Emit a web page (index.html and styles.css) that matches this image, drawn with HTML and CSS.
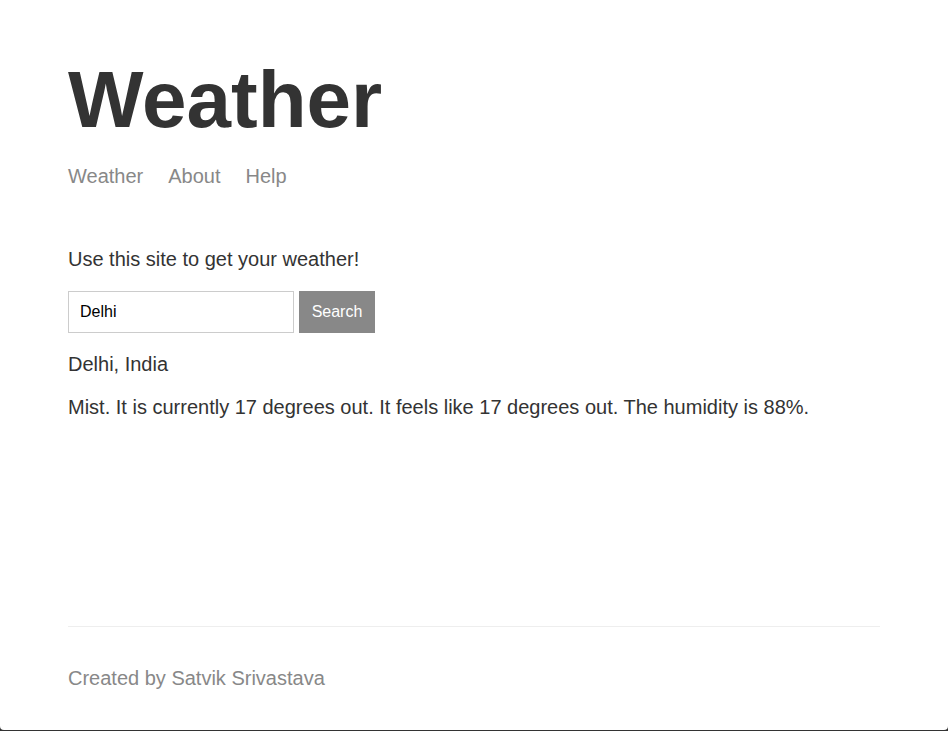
FILE: index.html
```html
<!DOCTYPE html>
<html lang="en">
<head>
<meta charset="utf-8">
<title>Weather</title>
<link rel="stylesheet" href="styles.css">
</head>
<body>
<div class="page">
  <div class="main-content">
    <header class="header">
      <h1 class="title">Weather</h1>
      <nav class="nav">
        <a class="nav-link" href="#">Weather</a>
        <a class="nav-link" href="#">About</a>
        <a class="nav-link" href="#">Help</a>
      </nav>
    </header>
    <main class="main">
      <p class="text">Use this site to get your weather!</p>
      <form class="search-form">
        <input class="search-input" type="text" value="Delhi">
        <button class="search-button" type="button">Search</button>
      </form>
      <p class="text">Delhi, India</p>
      <p class="text">Mist. It is currently 17 degrees out. It feels like 17 degrees out. The humidity is 88%.</p>
    </main>
  </div>
  <footer class="footer">
    <p class="footer-text">Created by Satvik Srivastava</p>
  </footer>
</div>
</body>
</html>
```
FILE: styles.css
```css
html {
  background: #333333;
}

body {
  margin: 0;
  font-family: "Liberation Sans", Arial, sans-serif;
  color: #333333;
}

.page {
  box-sizing: border-box;
  height: 730px;
  background: #ffffff;
  border-radius: 0 0 4px 4px;
  padding: 0 68px;
  display: flex;
  flex-direction: column;
}

.main-content {
  flex-grow: 1;
}

.header {
  padding-top: 54px;
}

.title {
  margin: 0 0 19px;
  font-size: 80px;
  font-weight: bold;
  line-height: 92px;
  color: #333333;
}

.nav {
  display: flex;
  gap: 25px;
  font-size: 20px;
  line-height: 23px;
}

.nav-link {
  color: #888888;
  text-decoration: none;
}

.main {
  padding-top: 40px;
}

.text {
  margin: 20px 0;
  font-size: 20px;
  line-height: 23px;
}

.search-form {
  display: flex;
  gap: 5px;
  margin: 0;
}

.search-input {
  box-sizing: border-box;
  width: 226px;
  height: 42px;
  margin: 0;
  padding: 0 11px;
  border: 1px solid #cccccc;
  border-radius: 0;
  font-family: "Liberation Sans", Arial, sans-serif;
  font-size: 16px;
  color: #000000;
  outline: none;
}

.search-button {
  box-sizing: border-box;
  width: 76px;
  height: 42px;
  margin: 0;
  padding: 0;
  border: none;
  border-radius: 0;
  background: #888888;
  color: #ffffff;
  font-family: "Liberation Sans", Arial, sans-serif;
  font-size: 16px;
}

.footer {
  border-top: 1px solid #eeeeee;
  padding: 40px 0;
  color: #888888;
}

.footer-text {
  margin: 0;
  font-size: 20px;
  line-height: 23px;
}
```
